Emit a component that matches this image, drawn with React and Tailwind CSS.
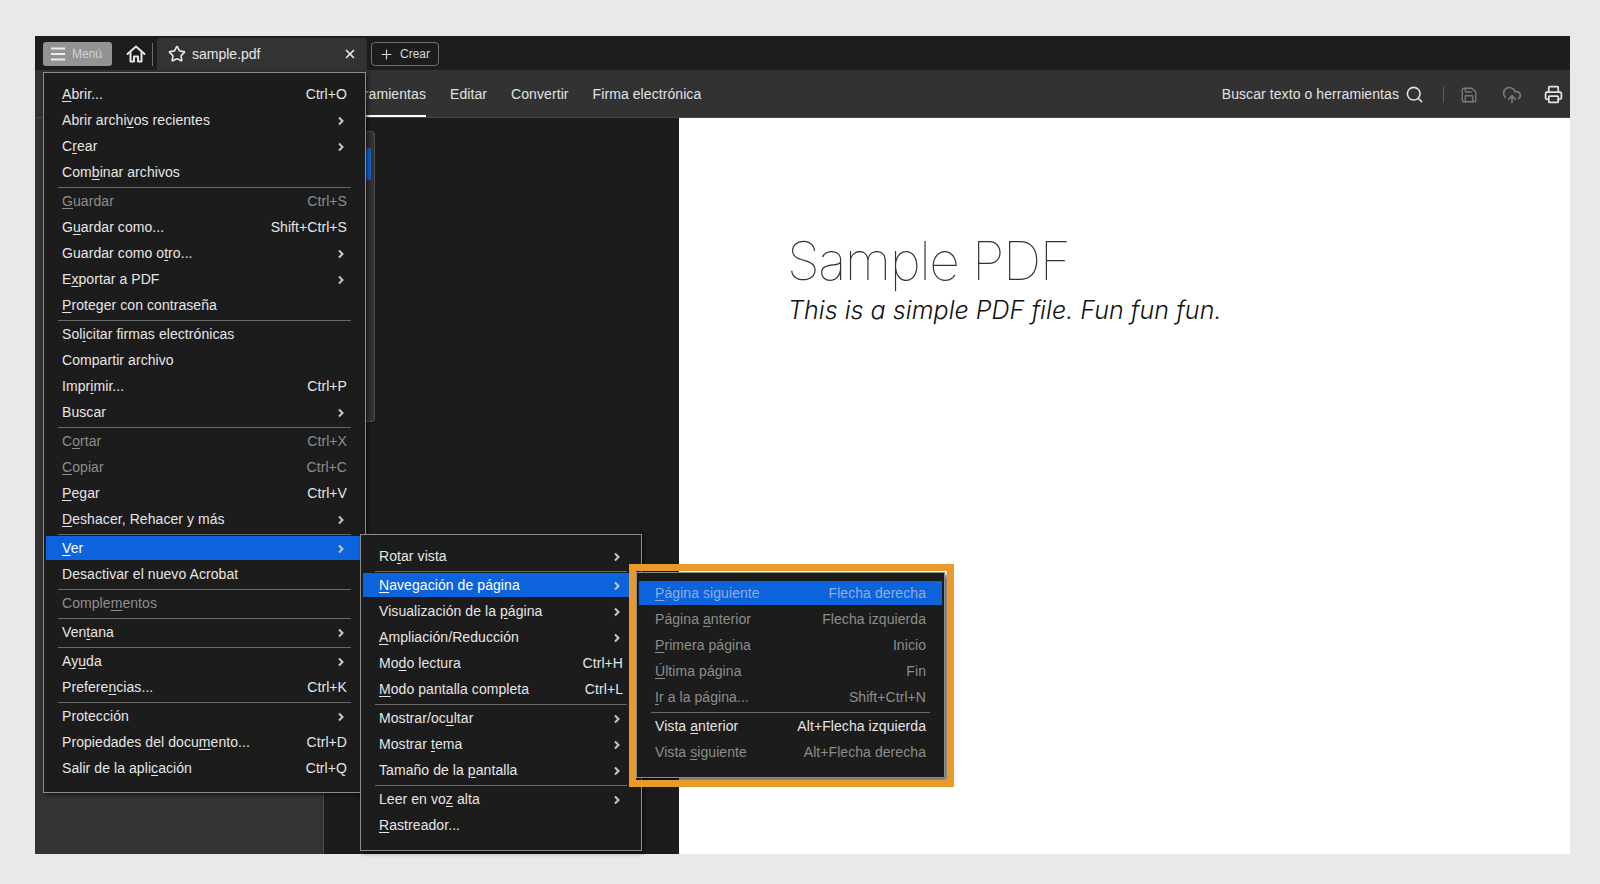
import React from 'react';
import { Star, X, Plus, Search, Save, CloudUpload, Printer } from 'lucide-react';

const mainMenu = [
  [
    { label: '&Abrir...', shortcut: 'Ctrl+O' },
    { label: 'Abrir archi&vos recientes', sub: true },
    { label: 'C&rear', sub: true },
    { label: 'Com&binar archivos' },
  ],
  [
    { label: '&Guardar', shortcut: 'Ctrl+S', disabled: true },
    { label: 'G&uardar como...', shortcut: 'Shift+Ctrl+S' },
    { label: 'Guardar como o&tro...', sub: true },
    { label: 'E&xportar a PDF', sub: true },
    { label: '&Proteger con contraseña' },
  ],
  [
    { label: 'Sol&icitar firmas electrónicas' },
    { label: 'Compartir archivo' },
    { label: 'Impr&imir...', shortcut: 'Ctrl+P' },
    { label: 'Buscar', sub: true },
  ],
  [
    { label: 'C&ortar', shortcut: 'Ctrl+X', disabled: true },
    { label: '&Copiar', shortcut: 'Ctrl+C', disabled: true },
    { label: '&Pegar', shortcut: 'Ctrl+V' },
    { label: '&Deshacer, Rehacer y más', sub: true },
  ],
  [
    { label: '&Ver', sub: true, active: true },
    { label: 'Desactivar el nuevo Acrobat' },
  ],
  [{ label: 'Comple&mentos', disabled: true }],
  [{ label: 'Ven&tana', sub: true }],
  [
    { label: 'Ay&uda', sub: true },
    { label: 'Prefere&ncias...', shortcut: 'Ctrl+K' },
  ],
  [
    { label: 'Protección', sub: true },
    { label: 'Propiedades del docu&mento...', shortcut: 'Ctrl+D' },
    { label: 'Salir de la apli&cación', shortcut: 'Ctrl+Q' },
  ],
];

const viewMenu = [
  [{ label: 'Ro&tar vista', sub: true }],
  [
    { label: '&Navegación de página', sub: true, active: true },
    { label: 'Visualización de la &página', sub: true },
    { label: '&Ampliación/Reducción', sub: true },
    { label: 'Mo&do lectura', shortcut: 'Ctrl+H' },
    { label: '&Modo pantalla completa', shortcut: 'Ctrl+L' },
  ],
  [
    { label: 'Mostrar/oc&ultar', sub: true },
    { label: 'Mostrar &tema', sub: true },
    { label: 'Tamaño de la &pantalla', sub: true },
  ],
  [
    { label: 'Leer en vo&z alta', sub: true },
    { label: '&Rastreador...' },
  ],
];

const pageMenu = [
  [
    { label: '&Página siguiente', shortcut: 'Flecha derecha', disabled: true, active: true },
    { label: 'Página &anterior', shortcut: 'Flecha izquierda', disabled: true },
    { label: '&Primera página', shortcut: 'Inicio', disabled: true },
    { label: '&Última página', shortcut: 'Fin', disabled: true },
    { label: '&Ir a la página...', shortcut: 'Shift+Ctrl+N', disabled: true },
  ],
  [
    { label: 'Vista &anterior', shortcut: 'Alt+Flecha izquierda' },
    { label: 'Vista &siguiente', shortcut: 'Alt+Flecha derecha', disabled: true },
  ],
];

// "&" marks the mnemonic letter
const Label = ({ text }) => {
  const i = text.indexOf('&');
  if (i < 0) return <span>{text}</span>;
  return (
    <span>
      {text.slice(0, i)}
      <span className="underline underline-offset-2">{text[i + 1]}</span>
      {text.slice(i + 2)}
    </span>
  );
};

const Chevron = () => (
  <svg width="6" height="10" viewBox="0 0 6 10" className="mr-[3px] mt-px">
    <path d="M1 1.5 L4.5 5 L1 8.5" fill="none" stroke="#c8c8c8" strokeWidth="2" />
  </svg>
);

const MenuRow = ({ item }) => {
  let color = 'text-[#e6e6e6]';
  if (item.disabled) color = 'text-[#8d8d8d]';
  if (item.active) color = 'text-white bg-[#0d63dc]';
  if (item.active && item.disabled) color = 'text-[#8aaee2] bg-[#0d63dc]';
  return (
    <div className="h-[26px] pt-[2px]">
      <div className={`h-6 mx-[2px] px-4 flex items-center justify-between ${color}`}>
        <Label text={item.label} />
        {item.shortcut && <span>{item.shortcut}</span>}
        {item.sub && <Chevron />}
      </div>
    </div>
  );
};

const Menu = ({ groups, className }) => (
  <div className={`absolute bg-[#1c1c1c] border border-[#8c8c8c] text-[14px] leading-none tracking-[0.07px] ${className}`}>
    {groups.map((rows, g) => (
      <div key={g}>
        {g > 0 && <div className="mx-[14px] mt-[3px] -mb-px h-px bg-[#686868]" />}
        {rows.map((item) => (
          <MenuRow key={item.label} item={item} />
        ))}
      </div>
    ))}
  </div>
);

const App = () => {
  return (
    <div className="relative w-[1600px] h-[884px] bg-[#e9e9e9] pt-[36px] pl-[35px] pr-[30px] pb-[30px] overflow-hidden font-['Liberation_Sans',Arial,sans-serif]">
      <div className="w-full h-full flex flex-col">
        {/* Top bar */}
        <div className="h-[34px] bg-[#1d1d1d] flex items-end pl-[8px] shrink-0">
          <div className="h-[24px] w-[69px] mb-[4px] rounded-[3px] bg-[#939393] flex items-center pl-[7px] gap-[6px]">
            <svg width="16" height="14" viewBox="0 0 16 14">
              <path d="M1 1.5h14M1 7h14M1 12.5h14" stroke="#ececec" strokeWidth="2" />
            </svg>
            <span className="text-[12px] text-[#d2d2d2]">Menú</span>
          </div>
          <div className="ml-[14px] mb-[6px] w-[20px] h-[20px]">
            <svg width="20" height="20" viewBox="0 0 20 20" fill="none" stroke="#e6e6e6" strokeWidth="2" strokeLinejoin="round" strokeLinecap="round">
              <path d="M1.5 10 10 2.5 18.5 10" />
              <path d="M4.5 8.5V17.5H8V12.5H12V17.5H15.5V8.5" />
            </svg>
          </div>
          <div className="ml-[6px] mb-[4px] w-px h-[23px] bg-[#6a6a6a]" />
          <div className="ml-[4px] w-[210px] h-[32px] bg-[#333333] rounded-t-[4px] flex items-center pl-[11px] pr-[10px] text-[#e6e6e6]">
            <Star size={18} strokeWidth={2.2} />
            <span className="ml-[6px] text-[14px]">sample.pdf</span>
            <X size={14} strokeWidth={3} className="ml-auto" />
          </div>
          <div className="ml-[4px] mb-[4px] w-[68px] h-[24px] border border-[#6f6f6f] rounded-[4px] flex items-center pl-[7px] gap-[6px] text-[#d8d8d8]">
            <Plus size={15} strokeWidth={1.8} />
            <span className="text-[12px]">Crear</span>
          </div>
        </div>

        {/* Toolbar */}
        <div className="h-[48px] bg-[#323232] border-b border-[#454545] flex items-stretch pl-[306px] pr-[7px] text-[14px] tracking-[0.08px] text-[#e2e2e2] shrink-0">
          <div className="flex items-center gap-[24px]">
            <div className="h-full flex items-center border-b-2 border-white pt-[4px]">Herramientas</div>
            <span className="pt-[2px]">Editar</span>
            <span className="pt-[2px]">Convertir</span>
            <span className="pt-[2px]">Firma electrónica</span>
          </div>
          <div className="ml-auto flex items-center pt-[2px]">
            <span>Buscar texto o herramientas</span>
            <Search size={19} strokeWidth={2} className="ml-[6px]" />
            <div className="ml-[19px] w-px h-[16px] bg-[#5c5c5c]" />
            <Save size={18} strokeWidth={1.8} className="ml-[16px] text-[#7a7a7a]" />
            <CloudUpload size={20} strokeWidth={2} className="ml-[24px] text-[#7a7a7a]" />
            <Printer size={19} strokeWidth={2.2} className="ml-[22px]" />
          </div>
        </div>

        {/* Body */}
        <div className="flex-1 flex min-h-0">
          <div className="w-[289px] bg-[#333333] border-r border-[#4a4a4a]" />
          <div className="w-[355px] bg-[#1c1c1c] pt-[13px] pl-[11px]">
            <div className="w-[40px] h-[291px] bg-[#333333] border border-[#4d4d4d] rounded-[3px] pt-[16px] flex justify-end pr-[3px]">
              <div className="w-[5px] h-[32px] bg-[#1465d6] rounded-[2px]" />
            </div>
          </div>
          <div className="flex-1 bg-white pt-[113px] pl-[108px]">
            <div className="text-[53.5px] leading-[60px] tracking-[-1.5px] font-['Inter',sans-serif] font-thin text-[#333]">Sample PDF</div>
            <div className="mt-[4px] ml-[1px] text-[25px] leading-[30px] tracking-[0.05px] font-['Inter',sans-serif] font-light italic text-[#111]">This is a simple PDF file. Fun fun fun.</div>
          </div>
        </div>
      </div>

      <Menu groups={mainMenu} className="left-[43px] top-[72px] w-[323px] pt-[7px] pb-[12px] shadow-[2px_2px_4px_rgba(0,0,0,0.55)]" />
      <Menu groups={viewMenu} className="left-[360px] top-[534px] w-[282px] pt-[7px] pb-[13px] shadow-[2px_2px_4px_rgba(0,0,0,0.55)]" />
      <Menu groups={pageMenu} className="left-[636px] top-[572px] w-[309px] pt-[6px] pb-[13px] shadow-[3px_3px_4px_rgba(0,0,0,0.6)]" />

      {/* Orange highlight frame */}
      <div className="absolute left-[629px] top-[564px] w-[325px] h-[223px] border-[7px] border-[#ea9a2a] pointer-events-none" />
    </div>
  );
};

export default App;
